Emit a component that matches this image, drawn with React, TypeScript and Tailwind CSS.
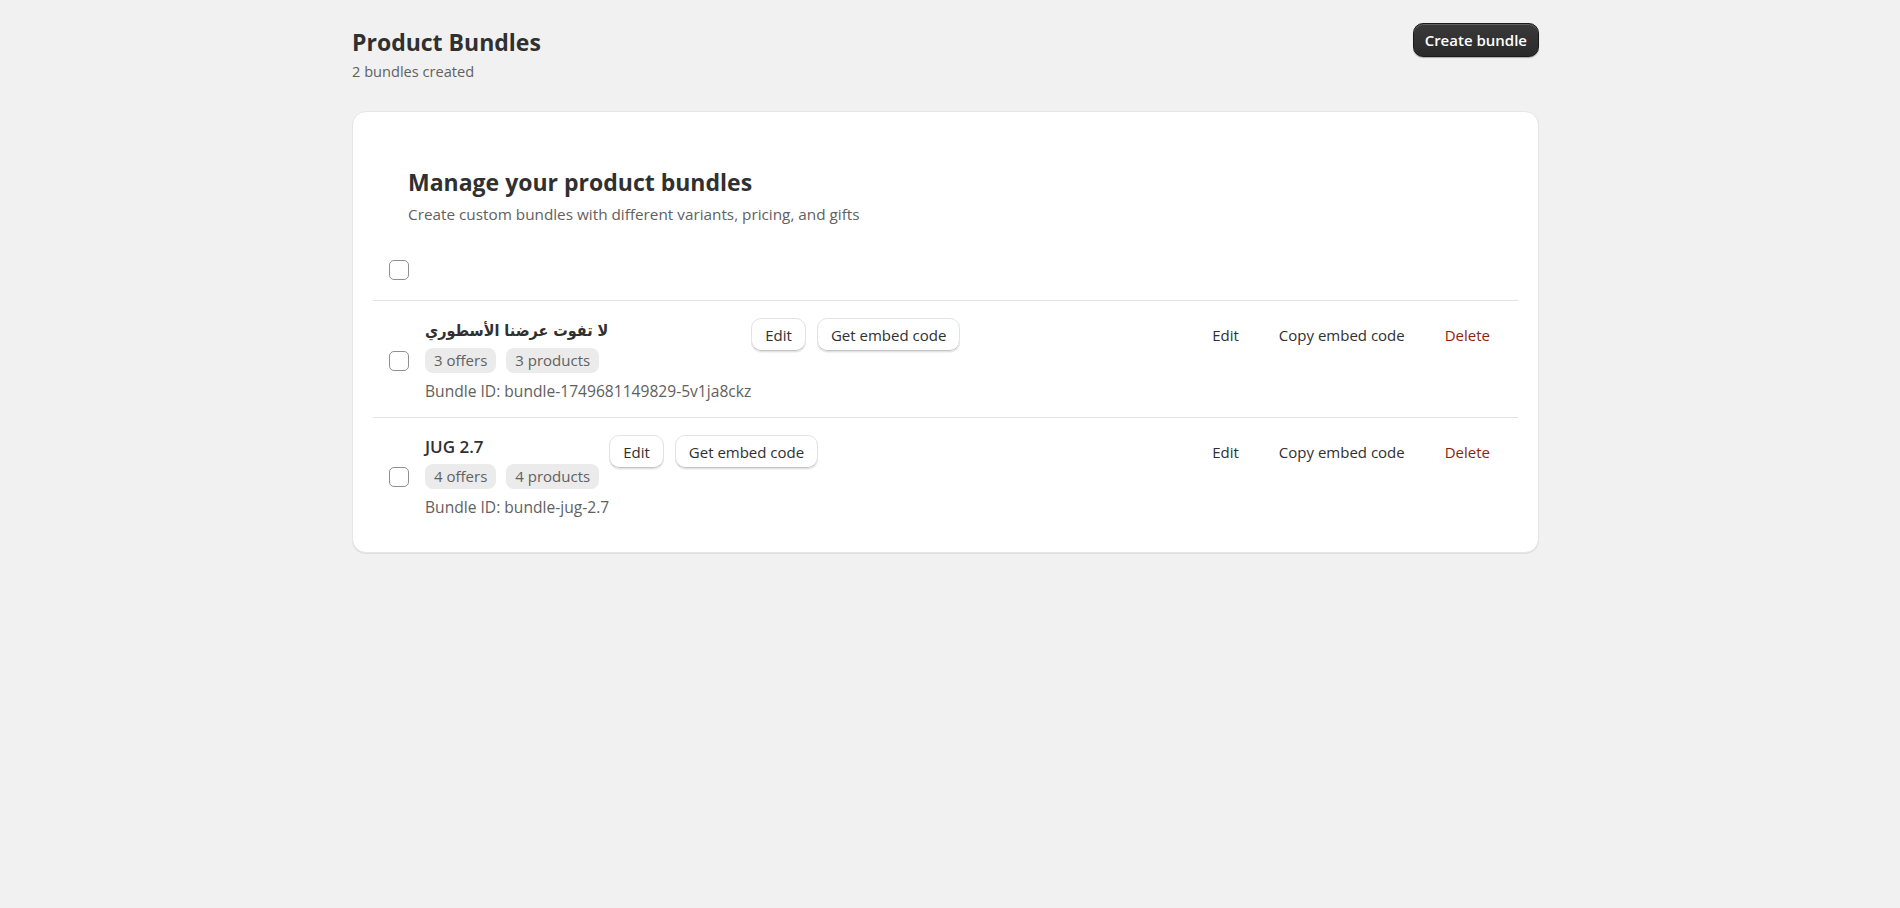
import React from 'react';

type Bundle = {
  id: string;
  name: string;
  offers: number;
  products: number;
};

const bundles: Bundle[] = [
  { id: 'bundle-1749681149829-5v1ja8ckz', name: 'لا تفوت عرضنا الأسطوري', offers: 3, products: 3 },
  { id: 'bundle-jug-2.7', name: 'JUG 2.7', offers: 4, products: 4 },
];

const isArabic = (s: string) => /[\u0600-\u06FF]/.test(s);

const Checkbox = () => (
  <span className="block h-5 w-5 shrink-0 rounded-[5px] border border-[#8f8f8f] bg-white" />
);

const SecondaryButton = ({ children }: { children: React.ReactNode }) => (
  <button
    type="button"
    className="h-[34px] rounded-[10px] border border-[#e3e3e3] bg-white px-[13px] text-[15px] font-medium text-[#303030] shadow-[inset_0_-1px_0_#c4c4c4,0_1px_0_rgba(0,0,0,0.05)]"
  >
    {children}
  </button>
);

const PlainButton = ({ children, danger }: { children: React.ReactNode; danger?: boolean }) => (
  <button
    type="button"
    className={
      danger
        ? 'h-[34px] px-[14px] text-[15px] text-[#8e1f0b]'
        : 'h-[34px] px-[14px] text-[15px] text-[#303030]'
    }
  >
    {children}
  </button>
);

const BundleRow = ({ bundle }: { bundle: Bundle }) => (
  <div className="flex items-start border-t border-[#e3e3e3] pb-[14px] pl-4 pr-[14px] pt-[17px]">
    <div className="flex h-[78px] items-center self-center">
      <Checkbox />
    </div>
    <div className="ml-4 flex flex-col">
      <div className="text-left text-[17px] font-semibold leading-6 text-[#303030]">
        {isArabic(bundle.name) ? (
          <span dir="rtl" className="font-['DejaVu_Sans_Condensed','DejaVu_Sans',sans-serif] text-[16px] font-bold">
            {bundle.name}
          </span>
        ) : (
          <span>{bundle.name}</span>
        )}
      </div>
      <div className="mt-[5px] flex gap-[10px]">
        <span className="flex h-[25px] items-center rounded-[8px] bg-[#ebebeb] px-[9px] text-[15px] text-[#616161]">
          {bundle.offers} offers
        </span>
        <span className="flex h-[25px] items-center rounded-[8px] bg-[#ebebeb] px-[9px] text-[15px] text-[#616161]">
          {bundle.products} products
        </span>
      </div>
      <div className="mt-[6px] text-[15.6px] leading-6 text-[#616161]">Bundle ID: {bundle.id}</div>
    </div>
    <div className="flex gap-[11px]">
      <SecondaryButton>Edit</SecondaryButton>
      <SecondaryButton>Get embed code</SecondaryButton>
    </div>
    <div className="ml-auto flex gap-[12px]">
      <PlainButton>Edit</PlainButton>
      <PlainButton>Copy embed code</PlainButton>
      <PlainButton danger>Delete</PlainButton>
    </div>
  </div>
);

export default function App() {
  return (
    <div
      className="min-h-screen bg-[#f1f1f1] text-[#303030]"
      style={{ fontFamily: '"Open Sans", "DejaVu Sans", sans-serif' }}
    >
      <div className="ml-[352px] w-[1187px] pt-[23px]">
        <div className="flex items-start justify-between">
          <div className="pt-[5px]">
            <h1 className="text-[23px] font-bold leading-7 text-[#303030]">Product Bundles</h1>
            <p className="mt-[3px] text-[14.6px] leading-6 text-[#616161]">2 bundles created</p>
          </div>
          <button
            type="button"
            className="h-[34px] rounded-[10px] border border-[#1a1a1a] bg-gradient-to-b from-[#3a3a3a] to-[#2a2a2a] px-[11px] text-[15px] font-semibold text-white shadow-[inset_0_1px_0_rgba(255,255,255,0.2),0_1px_1px_rgba(0,0,0,0.3)]"
          >
            Create bundle
          </button>
        </div>

        <div className="mt-[28px] rounded-[14px] border border-[#e6e6e6] bg-white px-5 pb-[19px] pt-[56px] shadow-[0_1px_0_rgba(0,0,0,0.08)]">
          <div className="pl-[35px]">
            <h2 className="text-[23px] font-bold leading-7 text-[#303030]">Manage your product bundles</h2>
            <p className="mt-[6px] text-[15.3px] leading-6 text-[#616161]">
              Create custom bundles with different variants, pricing, and gifts
            </p>
          </div>
          <div className="pb-[20px] pl-4 pt-[34px]">
            <Checkbox />
          </div>
          {bundles.map((b) => (
            <BundleRow key={b.id} bundle={b} />
          ))}
        </div>
      </div>
    </div>
  );
}
